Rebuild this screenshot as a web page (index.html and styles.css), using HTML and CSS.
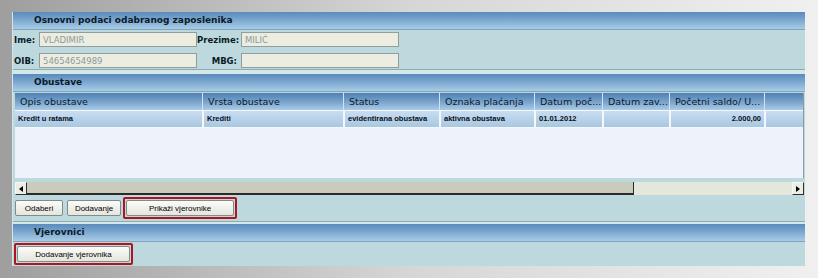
FILE: index.html
```html
<!DOCTYPE html>
<html lang="hr">
<head>
  <meta charset="UTF-8">
  <title>Obustave zaposlenika</title>
  <link rel="stylesheet" href="styles.css">
</head>
<body>

  <div class="panel">

    <div class="section-title">Osnovni podaci odabranog zaposlenika</div>
    <div class="fields">
      <label class="label">Ime:</label>
      <div class="field">VLADIMIR</div>
      <label class="label label-right">Prezime:</label>
      <div class="field">MILIĆ</div>

      <label class="label">OIB:</label>
      <div class="field">54654654989</div>
      <label class="label label-right">MBG:</label>
      <div class="field"></div>
    </div>
    <div class="separator"></div>

    <div class="section-title">Obustave</div>
    <div class="grid-wrap">
      <div class="grid">
        <div class="grid-row grid-head">
          <div class="cell">Opis obustave</div>
          <div class="cell">Vrsta obustave</div>
          <div class="cell">Status</div>
          <div class="cell">Oznaka plaćanja</div>
          <div class="cell">Datum poč...</div>
          <div class="cell">Datum zav...</div>
          <div class="cell">Početni saldo/ U...</div>
          <div class="cell"></div>
        </div>
        <div class="grid-row grid-data">
          <div class="cell">Kredit u ratama</div>
          <div class="cell">Krediti</div>
          <div class="cell">evidentirana obustava</div>
          <div class="cell">aktivna obustava</div>
          <div class="cell">01.01.2012</div>
          <div class="cell"></div>
          <div class="cell num">2.000,00</div>
          <div class="cell"></div>
        </div>
        <div class="grid-empty"></div>
      </div>
      <div class="scrollbar">
        <div class="scroll-btn"><span class="arrow-left"></span></div>
        <div class="scroll-thumb"></div>
        <div class="scroll-track"></div>
        <div class="scroll-btn"><span class="arrow-right"></span></div>
      </div>
    </div>
    <div class="buttons">
      <button class="btn btn-odaberi">Odaberi</button>
      <button class="btn btn-dodavanje">Dodavanje</button>
      <div class="marked marked-inline"><button class="btn btn-wide">Prikaži vjerovnike</button></div>
    </div>
    <div class="separator separator-thin"></div>

    <div class="section-title">Vjerovnici</div>
    <div class="buttons buttons-last">
      <div class="marked"><button class="btn btn-creditor">Dodavanje vjerovnika</button></div>
    </div>

  </div>

</body>
</html>
```

FILE: styles.css
```css
body {
  margin: 0;
  padding: 12px 13px 0 12px;
  height: 278px;
  box-sizing: border-box;
  background: linear-gradient(to right, #9e9e9e, #d6d6d6 50%, #f0f0f0);
  font-family: "DejaVu Sans", Verdana, sans-serif;
}

.panel {
  width: 793px;
  height: 254px;
  background-color: #bdd9dd;
  border-left: 1px solid #d4e6ea;
  box-sizing: border-box;
}

.section-title {
  height: 17px;
  line-height: 17px;
  padding-left: 21px;
  font-size: 9px;
  font-weight: bold;
  color: #0b1a28;
  background: linear-gradient(#5a8bbb, #7aa6cf 45%, #a9cce6);
  border-bottom: 1px solid #7fa4bc;
}

/* osnovni podaci */
.fields {
  display: grid;
  grid-template-columns: 25px 158px 44px 158px;
  grid-auto-rows: 15px;
  row-gap: 6px;
  padding: 2px 1px 1px;
  align-items: center;
}

.label {
  font-size: 8.5px;
  font-weight: bold;
  color: #0b1a28;
}

.label-right {
  text-align: right;
  padding-right: 4px;
}

.field {
  height: 15px;
  line-height: 14px;
  padding-left: 3px;
  box-sizing: border-box;
  border: 1px solid #8e9e9e;
  background-color: #ecece1;
  font-size: 8.5px;
  color: #8c9a9a;
}

.separator {
  height: 4px;
  border-top: 1px solid #8eaab2;
  background-color: #d4e8ea;
}

.separator-thin {
  height: 2px;
}

/* tablica obustava */
.grid-wrap {
  padding: 1px 1px 0 2px;
}

.grid {
  background-color: #eef2fa;
  border-right: 1px solid #8c9ca4;
}

.grid-row {
  display: grid;
  grid-template-columns: 187px 141px 96px 95px 68px 67px 95px 1fr;
}

.grid-head {
  height: 17px;
  background: linear-gradient(#4f80b2, #76a2cc 50%, #aacbe6);
}

.grid-head .cell {
  line-height: 17px;
  padding-left: 5px;
  font-size: 9.5px;
  color: #0c1a2c;
  border-left: 1px solid #d2e2f0;
  white-space: nowrap;
  overflow: hidden;
}

.grid-head .cell:first-child {
  border-left: none;
}

.grid-data {
  height: 16px;
  border-top: 1px solid #f4f7fc;
  border-bottom: 1px solid #f4f7fc;
}

.grid-data .cell {
  line-height: 16px;
  padding-left: 3px;
  font-family: "Liberation Sans", Arial, sans-serif;
  font-size: 7.5px;
  font-weight: bold;
  color: #05101c;
  background: linear-gradient(#c9ddf0, #a9c7e1);
  border-left: 2px solid #f4f7fc;
  white-space: nowrap;
  overflow: hidden;
}

.grid-data .cell:first-child {
  border-left: none;
}

.grid-data .num {
  text-align: right;
  padding-right: 3px;
}

.grid-empty {
  height: 50px;
}

.scrollbar {
  display: flex;
  height: 13px;
  margin-top: 4px;
}

.scroll-btn {
  width: 12px;
  height: 13px;
  box-sizing: border-box;
  background-color: #eceee6;
  border: 1px solid #f8f8f4;
  border-right-color: #303030;
  border-bottom-color: #303030;
  display: flex;
  align-items: center;
  justify-content: center;
}

.arrow-left {
  border-top: 3px solid transparent;
  border-bottom: 3px solid transparent;
  border-right: 4px solid #000;
}

.arrow-right {
  border-top: 3px solid transparent;
  border-bottom: 3px solid transparent;
  border-left: 4px solid #000;
}

.scroll-thumb {
  width: 607px;
  box-sizing: border-box;
  background-color: #c9ccba;
  border-bottom: 2px solid #2a2a2a;
  border-right: 1px solid #2a2a2a;
}

.scroll-track {
  flex: 1;
  background-color: #e4e7dc;
}

/* gumbi */
.buttons {
  display: flex;
  align-items: center;
  gap: 4px;
  height: 26px;
  padding-left: 2px;
}

.buttons-last {
  height: 24px;
  padding-left: 1px;
}

.btn {
  height: 16px;
  padding: 0;
  font-family: "Liberation Sans", Arial, sans-serif;
  font-size: 8px;
  color: #000;
  background: linear-gradient(#fbfbf8, #e6e6de);
  border: 1px solid #7f8c8c;
  border-radius: 2px;
}

.btn-odaberi {
  width: 48px;
}

.btn-dodavanje {
  width: 54px;
}

.marked {
  border: 2px solid #b0141c;
  border-radius: 2px;
  padding: 1px;
  display: flex;
}

.marked-inline {
  margin-left: -2px;
}

.btn-wide {
  width: 108px;
}

.btn-creditor {
  width: 113px;
}
```
